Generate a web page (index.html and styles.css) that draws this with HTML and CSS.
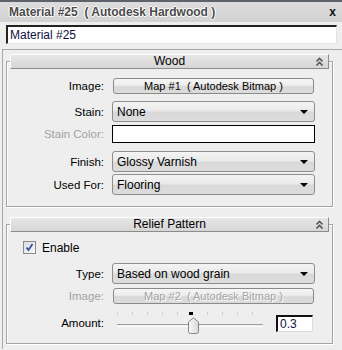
FILE: index.html
```html
<!DOCTYPE html>
<html lang="en">
<head>
    <meta charset="UTF-8">
    <title>Material #25</title>
    <link rel="stylesheet" href="styles.css">
</head>
<body>
    <div class="titlebar">
        <span class="title">Material #25  ( Autodesk Hardwood )</span>
        <span class="close">x</span>
    </div>
    <div class="name-field">Material #25</div>

    <div class="rollouts">
        <!-- Wood -->
        <section class="rollout">
            <div class="rollout-head">
                <span>Wood</span>
                <svg class="collapse" width="7" height="9" viewBox="0 0 7 9"><path d="M0.5 4.5 L3.5 1.5 L6.5 4.5 M0.5 8.5 L3.5 5.5 L6.5 8.5" fill="none" stroke="#5a5a5a" stroke-width="1.6"/></svg>
            </div>
            <div class="row h16 mt9">
                <span class="lbl">Image:</span>
                <div class="btn">Map #1  ( Autodesk Bitmap )</div>
            </div>
            <div class="row h21 mt7">
                <span class="lbl">Stain:</span>
                <div class="select"><span>None</span><i class="arrow"></i></div>
            </div>
            <div class="row h18 mt3">
                <span class="lbl off">Stain Color:</span>
                <div class="swatch"></div>
            </div>
            <div class="row h21 mt8">
                <span class="lbl">Finish:</span>
                <div class="select"><span>Glossy Varnish</span><i class="arrow"></i></div>
            </div>
            <div class="row h21 mt2 last-wood">
                <span class="lbl">Used For:</span>
                <div class="select"><span>Flooring</span><i class="arrow"></i></div>
            </div>
        </section>

        <!-- Relief Pattern -->
        <section class="rollout second">
            <div class="rollout-head">
                <span>Relief Pattern</span>
                <svg class="collapse" width="7" height="9" viewBox="0 0 7 9"><path d="M0.5 4.5 L3.5 1.5 L6.5 4.5 M0.5 8.5 L3.5 5.5 L6.5 8.5" fill="none" stroke="#5a5a5a" stroke-width="1.6"/></svg>
            </div>
            <div class="check-row">
                <span class="checkbox">
                    <svg width="9" height="9" viewBox="0 0 9 9"><path d="M1.5 4.5 L3.5 7 L7.5 1" fill="none" stroke="#3a4f9a" stroke-width="1.8"/></svg>
                </span>
                <span>Enable</span>
            </div>
            <div class="row h21 mt9">
                <span class="lbl">Type:</span>
                <div class="select"><span>Based on wood grain</span><i class="arrow"></i></div>
            </div>
            <div class="row h16 mt4">
                <span class="lbl off">Image:</span>
                <div class="btn disabled">Map #2  ( Autodesk Bitmap )</div>
            </div>
            <div class="row h22 mt8 last-relief">
                <span class="lbl">Amount:</span>
                <div class="amount">
                    <div class="slider">
                        <div class="ticks">
                            <i></i><i></i><i></i><i></i><i></i><i></i><i></i><i></i><i></i><i></i>
                        </div>
                        <div class="track"></div>
                        <i class="marker"></i>
                        <svg class="thumb" width="11" height="17" viewBox="0 0 11 17">
                            <defs>
                                <linearGradient id="tg" x1="0" y1="0" x2="1" y2="0">
                                    <stop offset="0" stop-color="#fafafa"/>
                                    <stop offset="1" stop-color="#d8d8d8"/>
                                </linearGradient>
                            </defs>
                            <path d="M0.5 5 L5.5 0.8 L10.5 5 L10.5 14.5 Q10.5 16.5 8.5 16.5 L2.5 16.5 Q0.5 16.5 0.5 14.5 Z" fill="url(#tg)" stroke="#858585"/>
                        </svg>
                    </div>
                    <div class="spinner">0.3</div>
                </div>
            </div>
        </section>
    </div>
</body>
</html>
```

FILE: styles.css
```css
body {
    margin: 0;
    background-color: #eeeeee;
    font-family: "Liberation Sans", Arial, sans-serif;
    font-size: 11px;
    color: #000;
    overflow: hidden;
}
.titlebar {
    height: 20px;
    border-top: 2px solid #5e6369;
    background: linear-gradient(#dcdcdc, #d2d2d2);
    display: flex;
    align-items: center;
    justify-content: space-between;
    padding: 0 6px 0 9px;
}
.title, .close {
    font-size: 12px;
    font-weight: bold;
    color: #4a4a4a;
    white-space: pre;
    text-shadow: 1px 0 #fff, -1px 0 #fff, 0 1px #fff, 0 -1px #fff;
}
.close {
    color: #111;
    text-shadow: none;
}
.name-field {
    height: 16px;
    margin: 3px 5px 0 6px;
    padding: 0 2px;
    background: #fff;
    border-top: 2px solid #222;
    border-left: 2px solid #222;
    border-right: 1px solid #e4e4e4;
    border-bottom: 1px solid #e4e4e4;
    line-height: 16px;
    font-size: 12px;
    color: #101040;
}
.rollouts {
    margin: 5px 0 0 2px;
    border-top: 1px solid #a8a8a8;
    border-left: 1px solid #a8a8a8;
    padding: 4px 9px 0 3px;
    height: 295px;
    overflow: hidden;
}
.rollout {
    margin-top: 7px;
    border: 1px solid #a4a4a4;
    box-shadow: inset 1px 1px #fff, 1px 1px #fff;
}
.rollout.second {
    margin-top: 17px;
}
.rollout-head {
    position: relative;
    height: 13px;
    margin: -8px 3px 0;
    border: 1px solid #8c8c8c;
    border-top-color: #fff;
    border-left-color: #fff;
    background: linear-gradient(#e6e6e6, #d6d6d6);
    text-align: center;
    line-height: 13px;
    font-size: 12px;
}
.collapse {
    position: absolute;
    right: 5px;
    top: 2px;
}
.row {
    display: grid;
    grid-template-columns: 97px 203px;
    column-gap: 8px;
    align-items: center;
}
.h16 { height: 16px; }
.h18 { height: 18px; }
.h21 { height: 21px; }
.h22 { height: 22px; }
.mt2 { margin-top: 2px; }
.mt3 { margin-top: 3px; }
.mt4 { margin-top: 4px; }
.mt7 { margin-top: 7px; }
.mt8 { margin-top: 8px; }
.mt9 { margin-top: 9px; }
.last-wood { margin-bottom: 11px; }
.last-relief { margin-bottom: 9px; }
.lbl {
    text-align: right;
    font-size: 11.5px;
}
.lbl.off {
    color: #a2a2a2;
}
.btn {
    box-sizing: border-box;
    height: 16px;
    margin: 0 1px 0 1px;
    border: 1px solid #8a8a8a;
    border-radius: 3px;
    background: linear-gradient(#f6f6f6 0%, #ececec 45%, #d8d8d8 55%, #dcdcdc 100%);
    text-align: center;
    line-height: 14px;
    white-space: pre;
}
.btn.disabled {
    color: #a4a4a4;
    text-shadow: 1px 1px #fff;
}
.select {
    box-sizing: border-box;
    height: 21px;
    display: flex;
    align-items: center;
    justify-content: space-between;
    padding: 0 6px 0 4px;
    border: 1px solid #8e8e8e;
    border-radius: 3px;
    background: linear-gradient(#f4f4f4 0%, #eaeaea 45%, #d9d9d9 55%, #dcdcdc 100%);
    font-size: 12px;
}
.arrow {
    width: 0;
    height: 0;
    border-left: 4px solid transparent;
    border-right: 4px solid transparent;
    border-top: 4px solid #000;
}
.swatch {
    box-sizing: border-box;
    height: 18px;
    background: #fff;
    border: 1px solid #000;
}
.check-row {
    height: 13px;
    margin-top: 9px;
    padding-left: 16px;
    display: flex;
    align-items: center;
    gap: 6px;
    font-size: 12px;
}
.checkbox {
    box-sizing: border-box;
    width: 13px;
    height: 13px;
    border: 1px solid #8b8b8b;
    background: linear-gradient(135deg, #dcdcdc, #f8f8f8);
    display: flex;
    align-items: center;
    justify-content: center;
}
.amount {
    display: flex;
    align-items: center;
    justify-content: space-between;
    height: 22px;
}
.slider {
    position: relative;
    width: 152px;
    height: 22px;
    margin-left: 5px;
}
.ticks {
    display: flex;
    gap: 14px;
    height: 3px;
}
.ticks i {
    width: 1px;
    height: 3px;
    background: #cfcfcf;
}
.track {
    margin-top: 9px;
    width: 146px;
    height: 1px;
    border-top: 1px solid #a0a0a0;
    border-bottom: 1px solid #fff;
}
.marker {
    position: absolute;
    left: 72px;
    top: 0;
    width: 4px;
    height: 3px;
    background: #000;
}
.thumb {
    position: absolute;
    left: 71px;
    top: 5px;
}
.spinner {
    box-sizing: border-box;
    width: 37px;
    height: 17px;
    margin-right: 2px;
    padding-left: 2px;
    background: #fff;
    border-top: 2px solid #111;
    border-left: 2px solid #111;
    border-right: 1px solid #dcdcdc;
    border-bottom: 1px solid #dcdcdc;
    font-size: 12px;
    line-height: 14px;
    color: #101040;
}
```
